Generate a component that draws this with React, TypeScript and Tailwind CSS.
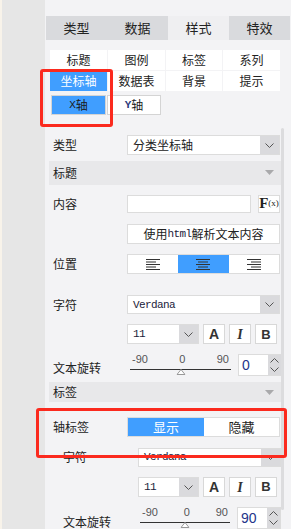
import React from 'react';

const cjk = "font-['Noto_Sans_CJK_SC',sans-serif]";
const mono = "font-['Liberation_Mono',monospace]";

const Chevron: React.FC<{ up?: boolean }> = ({ up }) => (
  <svg width="9" height="5" viewBox="0 0 9 5" className={up ? 'rotate-180' : ''}>
    <path d="M0.5 0.5L4.5 4.5L8.5 0.5" fill="none" stroke="#555" strokeWidth="1" />
  </svg>
);

const Caret = () => (
  <svg width="9" height="5" viewBox="0 0 9 5">
    <path d="M0 0H9L4.5 5Z" fill="#a9a9ab" />
  </svg>
);

const Select: React.FC<{ text: string; w: string; latin?: boolean }> = ({ text, w, latin }) => (
  <div className={`flex h-full ${w} border border-[#dcdcdc] bg-white`}>
    <div
      className={`flex-1 flex items-center pl-[5px] ${
        latin ? `${mono} text-[11px] tracking-[-0.6px] text-[#1b1b3a]` : 'text-[12px] text-[#222]'
      }`}
    >
      {text}
    </div>
    <div className="w-[19px] bg-[#dadadd] flex items-center justify-center">
      <Chevron />
    </div>
  </div>
);

const AlignIcon: React.FC<{ mode: 'l' | 'c' | 'r' }> = ({ mode }) => {
  const rows = [14, 10, 14, 10, 14];
  return (
    <svg width="14" height="11" viewBox="0 0 14 11">
      {rows.map((len, i) => {
        const x = mode === 'l' ? 0 : mode === 'c' ? (14 - len) / 2 : 14 - len;
        return <rect key={i} x={x} y={i * 2.5} width={len} height="1" fill="#333" />;
      })}
    </svg>
  );
};

const StyleButtons = () => (
  <div className="flex gap-[4px] ml-[4px] h-full">
    <div className="w-[22px] h-full bg-white border border-[#d8d8d8] flex items-center justify-center font-['Liberation_Sans',sans-serif] font-black text-[14px] text-[#333]">
      A
    </div>
    <div className="w-[22px] h-full bg-white border border-[#d8d8d8] flex items-center justify-center font-['Liberation_Serif',serif] italic font-bold text-[14px] text-[#333]">
      I
    </div>
    <div className="w-[22px] h-full bg-white border border-[#d8d8d8] flex items-center justify-center font-['Liberation_Sans',sans-serif] font-black text-[13px] text-[#333]">
      B
    </div>
  </div>
);

const Slider: React.FC<{ w: string; value: string }> = ({ w, value }) => (
  <div className="flex h-full items-start">
    <div className={`relative ${w} h-full`}>
      <div className="flex justify-between text-[11px] leading-[11px] text-[#555] font-['Liberation_Sans',sans-serif] px-[2px]">
        <span>-90</span>
        <span>0</span>
        <span>90</span>
      </div>
      <div className="absolute left-0 right-0 top-[15px] h-px bg-[#333]" />
      <svg width="9" height="6" viewBox="0 0 9 6" className="absolute left-1/2 -translate-x-1/2 top-[15px]">
        <path d="M4.5 0.5L8.5 5.5H0.5Z" fill="#fff" stroke="#999" strokeWidth="1" />
      </svg>
    </div>
    <div className="flex h-full ml-[7px] border border-[#dcdcdc]">
      <div className="w-[29px] bg-white flex items-center pl-[3px] text-[14px] text-[#23348a] font-['Liberation_Sans',sans-serif]">
        {value}
      </div>
      <div className="w-[13px] bg-[#dadadd] flex flex-col items-center justify-between py-[3px]">
        <Chevron up />
        <Chevron />
      </div>
    </div>
  </div>
);

const Header: React.FC<{ title: string }> = ({ title }) => (
  <div className="ml-[3px] w-[232px] bg-[#e8e8ea] flex items-center justify-between pl-[4px] pr-[7px] text-[12px] text-[#222]">
    <span>{title}</span>
    <Caret />
  </div>
);

export default function App() {
  const tabs = ['类型', '数据', '样式', '特效'];
  const sub = ['标题', '图例', '标签', '系列', '坐标轴', '数据表', '背景', '提示'];

  return (
    <div className={`relative w-[291px] h-[529px] flex overflow-hidden bg-[#f3f3f5] ${cjk}`}>
      <div className="w-[45px] h-full bg-[#e6e6e6] border-l-2 border-[#f8f3ea] shrink-0" />

      <div className="flex-1 flex flex-col pt-[16px] pl-px">
        {/* tab bar */}
        <div className="flex w-[244px] h-[25px]">
          {tabs.map((t) => (
            <div
              key={t}
              className={`w-[61px] flex items-center justify-center text-[13px] text-[#222] ${
                t === '样式' ? 'bg-[#efeff1]' : 'bg-[#d9dadd]'
              }`}
            >
              {t}
            </div>
          ))}
        </div>

        {/* sub tabs */}
        <div className="mt-[10px] ml-[4px] grid grid-cols-[57px_57px_56px_57px] gap-x-[1px] gap-y-[1px] w-[231px]">
          {sub.map((s) => (
            <div
              key={s}
              className={`h-[20px] flex items-center justify-center text-[12px] ${
                s === '坐标轴' ? 'bg-[#409eff] text-white' : 'bg-white text-[#222]'
              }`}
            >
              {s}
            </div>
          ))}
        </div>

        {/* axis */}
        <div className="mt-[4px] ml-[5px] flex gap-px h-[21px]">
          <div className="w-[55px] border border-[#d4d4d4] bg-[#409eff] flex items-center justify-center text-[12px] text-[#1a1a1a]">
            <span className={`${mono} text-[11px]`}>X</span>轴
          </div>
          <div className="w-[54px] border border-[#d4d4d4] bg-white flex items-center justify-center text-[12px] text-[#1a1a1a]">
            <span className={`${mono} text-[11px] font-bold text-[#2a3a7a]`}>Y</span>轴
          </div>
        </div>

        {/* 类型 */}
        <div className="mt-[20px] ml-[7px] flex items-center h-[20px]">
          <div className="w-[74px] text-[12px] text-[#222]">类型</div>
          <Select text="分类坐标轴" w="w-[153px]" />
        </div>

        <div className="mt-[6px] h-[24px] flex">
          <Header title="标题" />
        </div>

        {/* 内容 */}
        <div className="mt-[10px] ml-[7px] flex items-center h-[19px]">
          <div className="w-[74px] text-[12px] text-[#222]">内容</div>
          <div className="w-[124px] h-full bg-white border border-[#dcdcdc]" />
          <div className="ml-[7px] w-[22px] h-full bg-white border border-[#dcdcdc] flex items-center justify-center font-['Liberation_Serif',serif] text-[#222]">
            <span className="text-[15px] font-bold leading-none">F</span>
            <span className="text-[9px] leading-none">(x)</span>
          </div>
        </div>

        <div className="mt-[11px] ml-[81px] w-[153px] h-[20px] bg-white border border-[#dcdcdc] flex items-center justify-center text-[12px] text-[#222]">
          使用<span className={`${mono} text-[11px] tracking-[-0.6px] text-[#1b1b3a]`}>html</span>解析文本内容
        </div>

        {/* 位置 */}
        <div className="mt-[10px] ml-[7px] flex items-center h-[21px]">
          <div className="w-[74px] text-[12px] text-[#222]">位置</div>
          <div className="w-[153px] h-full flex border border-[#dcdcdc] bg-white">
            <div className="flex-1 flex items-center justify-center">
              <AlignIcon mode="l" />
            </div>
            <div className="flex-1 flex items-center justify-center bg-[#409eff]">
              <AlignIcon mode="c" />
            </div>
            <div className="flex-1 flex items-center justify-center">
              <AlignIcon mode="r" />
            </div>
          </div>
        </div>

        {/* 字符 */}
        <div className="mt-[21px] ml-[7px] flex items-center h-[20px]">
          <div className="w-[74px] text-[12px] text-[#222]">字符</div>
          <Select text="Verdana" w="w-[153px]" latin />
        </div>
        <div className="mt-[10px] ml-[81px] flex h-[20px]">
          <Select text="11" w="w-[72px]" latin />
          <StyleButtons />
        </div>

        {/* 文本旋转 */}
        <div className="mt-[10px] ml-[7px] flex items-start h-[22px]">
          <div className="w-[77px] pt-[5px] text-[12px] text-[#222]">文本旋转</div>
          <Slider w="w-[101px]" value="0" />
        </div>

        <div className="mt-[6px] h-[20px] flex">
          <Header title="标签" />
        </div>

        {/* 轴标签 */}
        <div className="mt-[15px] ml-[7px] flex items-center h-[20px]">
          <div className="w-[74px] text-[12px] text-[#222]">轴标签</div>
          <div className="w-[153px] h-full flex border border-[#dcdcdc] bg-white text-[13px]">
            <div className="w-[76px] bg-[#409eff] text-white flex items-center justify-center">显示</div>
            <div className="flex-1 flex items-center justify-center text-[#222]">隐藏</div>
          </div>
        </div>

        {/* group 2 */}
        <div className="mt-[11px] ml-[17px] flex items-center h-[20px]">
          <div className="w-[75px] text-[12px] text-[#222]">字符</div>
          <Select text="Verdana" w="w-[143px]" latin />
        </div>
        <div className="mt-[10px] ml-[92px] flex h-[20px]">
          <Select text="11" w="w-[61px]" latin />
          <StyleButtons />
        </div>
        <div className="mt-[10px] ml-[17px] flex items-start h-[22px]">
          <div className="w-[77px] pt-[6px] text-[12px] text-[#222]">文本旋转</div>
          <Slider w="w-[90px]" value="90" />
        </div>
      </div>

      {/* scrollbar */}
      <div className="absolute left-[281px] top-[128px] w-[3px] h-[382px] rounded-full bg-[#dcdcde]" />

      {/* highlight boxes */}
      <div className="absolute left-[40px] top-[69px] w-[73px] h-[58px] border-[3px] border-[#fb2a1e] rounded-[3px]" />
      <div className="absolute left-[36px] top-[408px] w-[251px] h-[50px] border-[3px] border-[#fb2a1e] rounded-[3px]" />
    </div>
  );
}
